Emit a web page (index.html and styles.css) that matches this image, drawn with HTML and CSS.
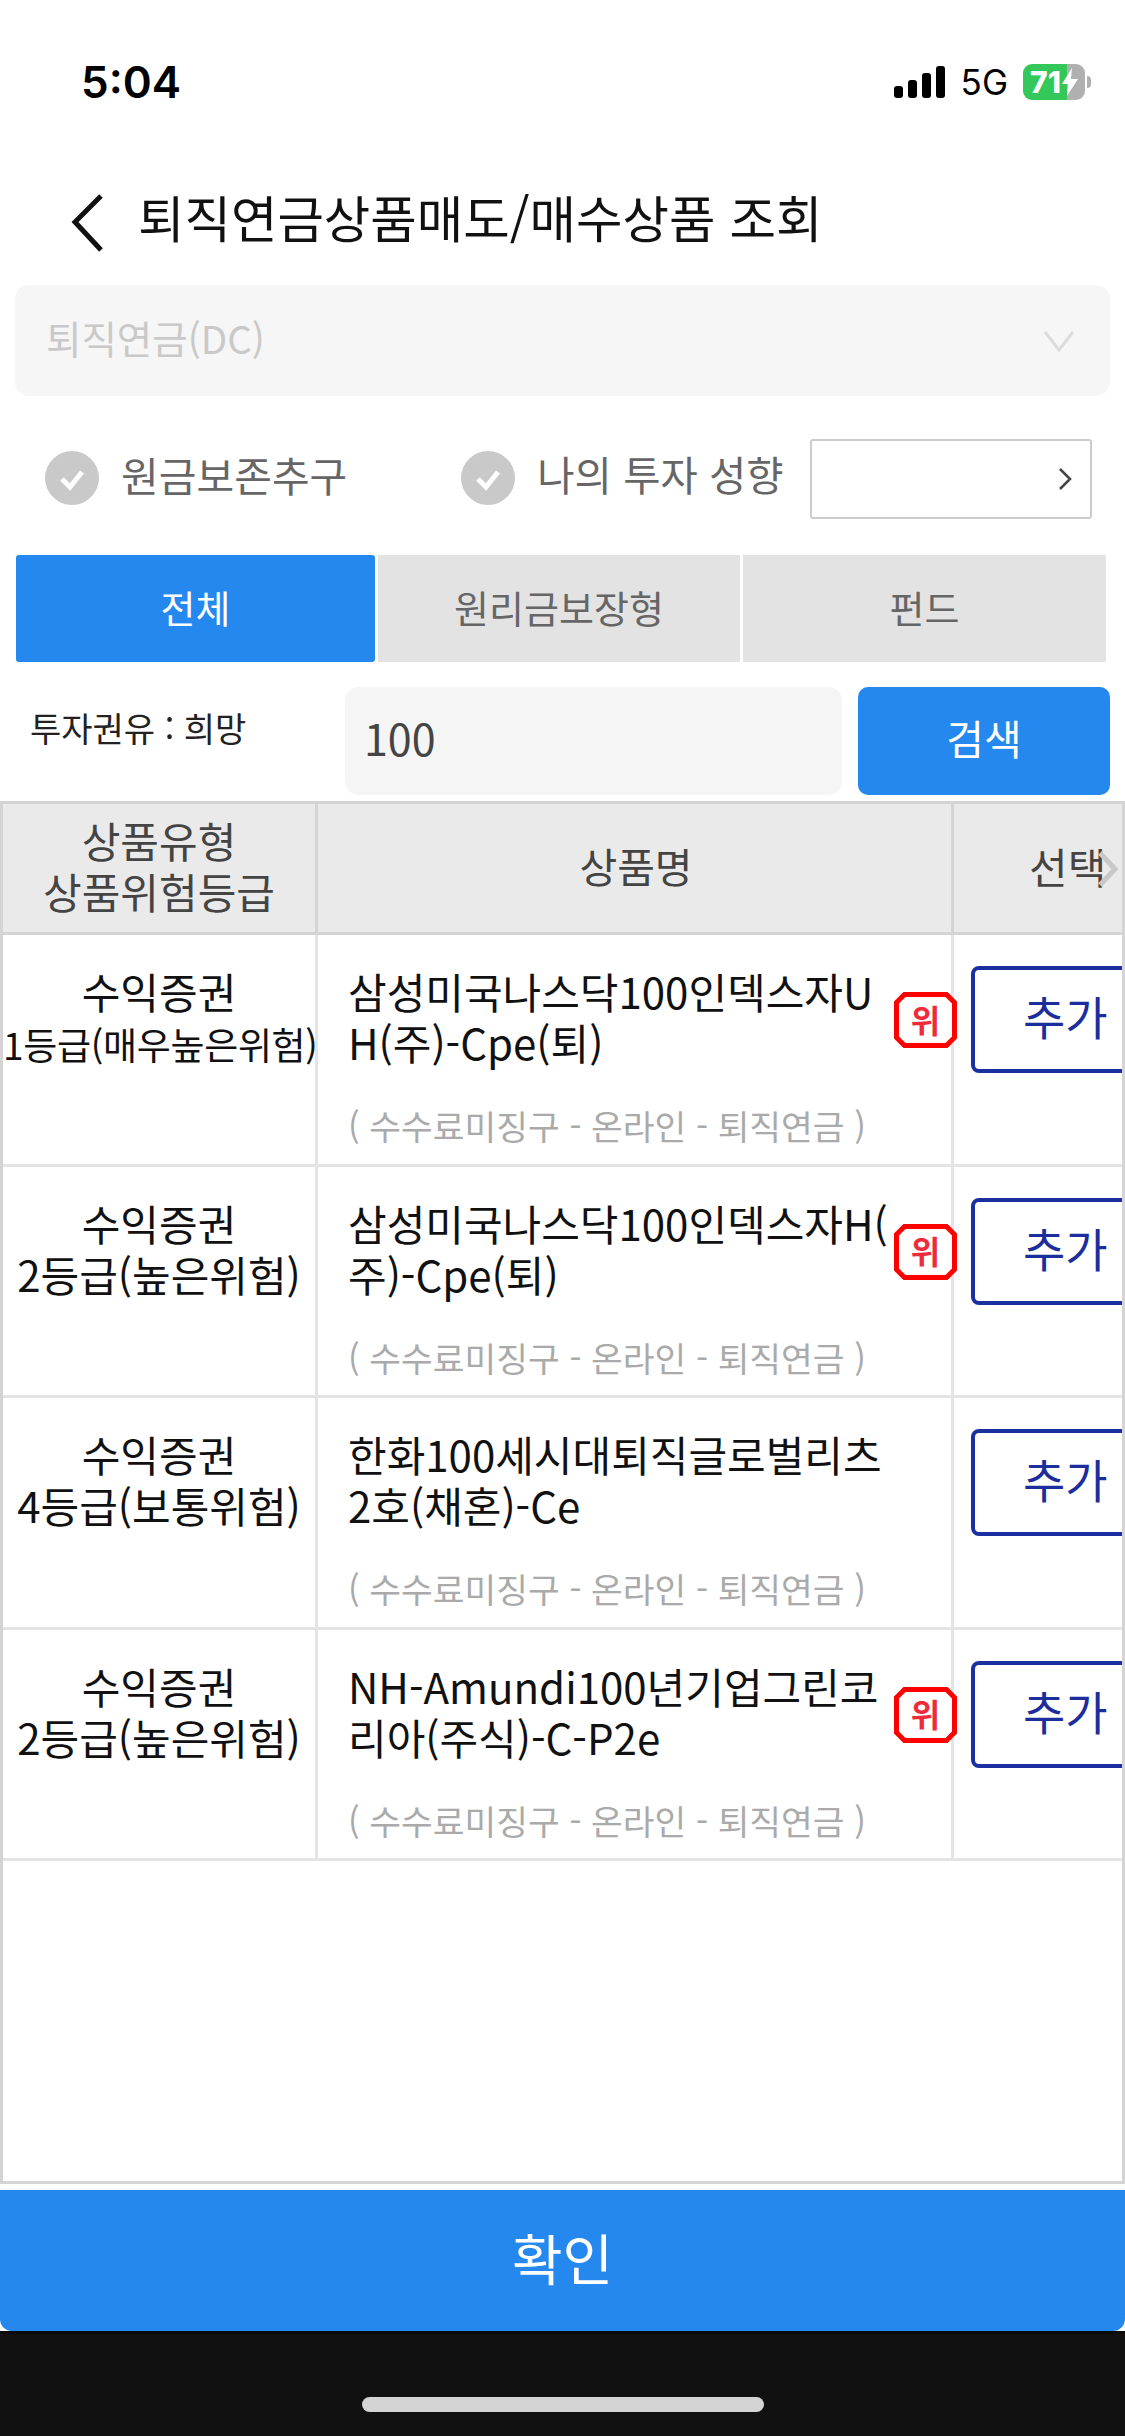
FILE: index.html
```html
<!DOCTYPE html>
<html lang="ko">
	<head>
		<meta charset="UTF-8">
		<meta name="viewport" content="width=device-width, initial-scale=1.0">
		<title>퇴직연금상품매도/매수상품 조회</title>
		<link rel="stylesheet" href="styles.css">
	</head>
	<body>
		<div class="page">
			<div class="statusbar">
				<span class="time">5:04</span>
				<div class="status-right">
					<div class="signal"><i class="b1"></i><i class="b2"></i><i class="b3"></i><i class="b4"></i></div>
					<span class="net">5G</span>
					<div class="battery">
						<span class="batt-num">71</span>
						<svg class="bolt" width="16" height="28" viewBox="0 0 16 28"><path d="M10 0 L0 16 H6 L5 28 L16 11 H9 Z" fill="#fff"/></svg>
					</div>
					<div class="batt-nub"></div>
				</div>
			</div>

			<div class="header">
				<svg class="back" width="34" height="58" viewBox="0 0 34 58"><polyline points="31,2 5,28 31,56" fill="none" stroke="#111" stroke-width="5"/></svg>
				<span class="title">퇴직연금상품매도/매수상품 조회</span>
			</div>

			<div class="select">
				<span>퇴직연금(DC)</span>
				<svg width="32" height="24" viewBox="0 0 32 24"><polyline points="2,3 16,21 30,3" fill="none" stroke="#dcdcdc" stroke-width="3"/></svg>
			</div>

			<div class="checks">
				<div class="check">
					<svg width="54" height="54" viewBox="0 0 54 54"><circle cx="27" cy="27" r="27" fill="#c9c9c9"/><polyline points="17,28 25,36 37,21" fill="none" stroke="#fff" stroke-width="5"/></svg>
					<span>원금보존추구</span>
				</div>
				<div class="check check-second">
					<svg width="54" height="54" viewBox="0 0 54 54"><circle cx="27" cy="27" r="27" fill="#c9c9c9"/><polyline points="17,28 25,36 37,21" fill="none" stroke="#fff" stroke-width="5"/></svg>
					<span>나의 투자 성향</span>
				</div>
				<div class="tendency">
					<svg width="14" height="24" viewBox="0 0 14 24"><polyline points="2,2 12,12 2,22" fill="none" stroke="#444" stroke-width="2.5"/></svg>
				</div>
			</div>

			<div class="tabs">
				<div class="tab active">전체</div>
				<div class="tab">원리금보장형</div>
				<div class="tab">펀드</div>
			</div>

			<div class="searchrow">
				<div class="invest">투자권유 : 희망</div>
				<div class="searchbox">100</div>
				<div class="searchbtn">검색</div>
			</div>

			<div class="table">
				<div class="row row-head">
					<div class="cell c1">상품유형<br>상품위험등급</div>
					<div class="cell c2 head-name">상품명</div>
					<div class="cell c3 head-select">
						<span>선택</span>
						<svg class="more" width="20" height="38" viewBox="0 0 20 38"><polyline points="2,3 17,19 2,35" fill="none" stroke="#c8c8c8" stroke-width="5"/></svg>
					</div>
				</div>

				<div class="row">
					<div class="cell c1"><div class="kind">수익증권<br><span class="tight">1등급(매우높은위험)</span></div></div>
					<div class="cell c2 name">
						<div class="name-text">삼성미국나스닥100인덱스자U<br>H(주)-Cpe(퇴)</div>
						<div class="sub">( 수수료미징구 - 온라인 - 퇴직연금 )</div>
						<span class="risk"><svg width="63" height="56" viewBox="0 0 63 56"><polygon points="10.5,2.5 52.5,2.5 60.5,10.5 60.5,45.5 52.5,53.5 10.5,53.5 2.5,45.5 2.5,10.5" fill="#fff" stroke="#f00" stroke-width="5"/></svg><b>위</b></span>
					</div>
					<div class="cell c3"><div class="add">추가</div></div>
				</div>

				<div class="row">
					<div class="cell c1"><div class="kind">수익증권<br>2등급(높은위험)</div></div>
					<div class="cell c2 name">
						<div class="name-text">삼성미국나스닥100인덱스자H(<br>주)-Cpe(퇴)</div>
						<div class="sub">( 수수료미징구 - 온라인 - 퇴직연금 )</div>
						<span class="risk"><svg width="63" height="56" viewBox="0 0 63 56"><polygon points="10.5,2.5 52.5,2.5 60.5,10.5 60.5,45.5 52.5,53.5 10.5,53.5 2.5,45.5 2.5,10.5" fill="#fff" stroke="#f00" stroke-width="5"/></svg><b>위</b></span>
					</div>
					<div class="cell c3"><div class="add">추가</div></div>
				</div>

				<div class="row">
					<div class="cell c1"><div class="kind">수익증권<br>4등급(보통위험)</div></div>
					<div class="cell c2 name">
						<div class="name-text">한화100세시대퇴직글로벌리츠<br>2호(채혼)-Ce</div>
						<div class="sub">( 수수료미징구 - 온라인 - 퇴직연금 )</div>
					</div>
					<div class="cell c3"><div class="add">추가</div></div>
				</div>

				<div class="row">
					<div class="cell c1"><div class="kind">수익증권<br>2등급(높은위험)</div></div>
					<div class="cell c2 name">
						<div class="name-text">NH-Amundi100년기업그린코<br>리아(주식)-C-P2e</div>
						<div class="sub">( 수수료미징구 - 온라인 - 퇴직연금 )</div>
						<span class="risk"><svg width="63" height="56" viewBox="0 0 63 56"><polygon points="10.5,2.5 52.5,2.5 60.5,10.5 60.5,45.5 52.5,53.5 10.5,53.5 2.5,45.5 2.5,10.5" fill="#fff" stroke="#f00" stroke-width="5"/></svg><b>위</b></span>
					</div>
					<div class="cell c3"><div class="add">추가</div></div>
				</div>
			</div>

			<div class="confirm">확인</div>

			<div class="homebar"><div class="indicator"></div></div>
		</div>
	</body>
</html>
```

FILE: styles.css
```css
* {
	box-sizing: border-box;
}

body {
	margin: 0;
	padding: 0;
	font-family: "Noto Sans CJK KR", "Noto Sans", sans-serif;
	background-color: #ffffff;
}

.page {
	width: 1125px;
	height: 2436px;
	display: flex;
	flex-direction: column;
	overflow: hidden;
}

/* status bar */
.statusbar {
	height: 150px;
	flex: none;
	display: flex;
	justify-content: space-between;
	padding: 57px 34px 0 81px;
}

.time {
	font-family: Inter, sans-serif;
	font-size: 44px;
	font-weight: 600;
	line-height: 50px;
	color: #000000;
}

.status-right {
	display: flex;
	align-items: center;
	height: 50px;
}

.signal {
	display: flex;
	align-items: flex-end;
	gap: 5px;
	height: 32px;
}

.signal i {
	display: block;
	width: 9px;
	border-radius: 3px;
	background-color: #000000;
}

.b1 { height: 12px; }
.b2 { height: 18px; }
.b3 { height: 25px; }
.b4 { height: 32px; }

.net {
	font-family: Inter, sans-serif;
	font-size: 35px;
	line-height: 36px;
	margin-left: 16px;
	color: #000000;
}

.battery {
	width: 62px;
	height: 36px;
	margin-left: 15px;
	border-radius: 9px;
	display: flex;
	align-items: center;
	padding-left: 7px;
	background: linear-gradient(to right, #34c759 44px, #b0b0b0 44px);
}

.batt-num {
	font-family: Inter, sans-serif;
	font-size: 30px;
	font-weight: 800;
	line-height: 36px;
	color: #ffffff;
}

.bolt {
	margin-left: 1px;
}

.batt-nub {
	width: 4px;
	height: 12px;
	margin-left: 2px;
	border-radius: 0 4px 4px 0;
	background-color: #b0b0b0;
}

/* header */
.header {
	height: 135px;
	flex: none;
	display: flex;
	align-items: flex-start;
	padding: 44px 0 0 70px;
}

.back {
	flex: none;
}

.title {
	font-size: 50.5px;
	line-height: 52px;
	margin-top: -4px;
	margin-left: 34px;
	color: #111111;
}

.select {
	height: 111px;
	flex: none;
	margin: 0 15px;
	padding: 0 35px 8px 31px;
	display: flex;
	align-items: center;
	justify-content: space-between;
	font-size: 38.5px;
	color: #c9c9c9;
	background-color: #f6f6f6;
	border-radius: 14px;
}

.select svg {
	margin-top: 8px;
}

/* checks */
.checks {
	height: 159px;
	flex: none;
	display: flex;
	align-items: flex-start;
	padding: 43px 33px 0 45px;
}

.check {
	display: flex;
	align-items: center;
	height: 78px;
	font-size: 41px;
	color: #666666;
}

.check span {
	margin-left: 22px;
	padding-bottom: 9px;
}

.check-second {
	margin-left: 114px;
	font-size: 40.5px;
}

.tendency {
	width: 282px;
	height: 80px;
	margin-left: auto;
	display: flex;
	align-items: center;
	justify-content: flex-end;
	padding-right: 18px;
	background-color: #ffffff;
	border: 2px solid #cccccc;
	border-radius: 3px;
}

/* tabs */
.tabs {
	height: 107px;
	flex: none;
	margin: 0 19px 0 16px;
	display: grid;
	grid-template-columns: 359px 362px 363px;
	gap: 3px;
}

.tab {
	display: flex;
	align-items: center;
	justify-content: center;
	padding-bottom: 5px;
	font-size: 38px;
	color: #666666;
	background-color: #e3e3e3;
}

.tab.active {
	color: #ffffff;
	background-color: #2488ee;
	border-radius: 3px;
}

/* search */
.searchrow {
	height: 108px;
	flex: none;
	margin: 25px 15px 0 0;
	display: flex;
}

.invest {
	width: 345px;
	padding: 19px 0 0 30px;
	font-size: 34px;
	line-height: 44px;
	color: #222222;
}

.searchbox {
	width: 497px;
	padding: 0 0 9px 19px;
	display: flex;
	align-items: center;
	font-size: 43px;
	color: #444444;
	background-color: #f5f5f5;
	border-radius: 14px;
}

.searchbtn {
	width: 252px;
	margin-left: 16px;
	padding-bottom: 9px;
	display: flex;
	align-items: center;
	justify-content: center;
	font-size: 41px;
	color: #ffffff;
	background-color: #2488ee;
	border-radius: 10px;
}

/* table */
.table {
	height: 1383px;
	flex: none;
	margin-top: 6px;
	border: 3px solid #d4d4d4;
	overflow: hidden;
	background-color: #ffffff;
}

.row {
	height: 231.5px;
	display: grid;
	grid-template-columns: 315px 636px 1fr;
	border-bottom: 3px solid #e4e4e4;
}

.row-head {
	height: 131px;
	color: #444444;
	background-color: #eaeaea;
	border-bottom: 3px solid #d4d4d4;
}

.cell {
	position: relative;
	font-size: 42px;
	line-height: 51px;
	color: #111111;
}

.row-head .cell {
	display: flex;
	align-items: center;
	justify-content: center;
	padding-bottom: 6px;
	text-align: center;
	color: #444444;
}

.c1, .c2 {
	border-right: 3px solid #e4e4e4;
}

.row-head .c1, .row-head .c2 {
	border-right-color: #d4d4d4;
}

.kind {
	padding-top: 30px;
	text-align: center;
}

.tight {
	font-size: 37px;
	letter-spacing: -0.3px;
	white-space: nowrap;
}

.row-head .head-name {
	padding-left: 3px;
	font-size: 41px;
}

.row-head .head-select {
	justify-content: flex-start;
	padding-left: 75px;
}

.head-select span {
	white-space: nowrap;
}

.more {
	position: absolute;
	top: 46px;
	right: 4px;
}

.name {
	padding: 30px 0 0 30px;
}

.name-text {
	font-size: 42px;
	line-height: 51px;
	white-space: nowrap;
}

.sub {
	margin-top: 36px;
	font-size: 34.5px;
	line-height: 44px;
	white-space: nowrap;
	color: #aaaaaa;
}

.risk {
	position: absolute;
	top: 57px;
	right: -6px;
	width: 63px;
	height: 56px;
	display: flex;
	align-items: center;
	justify-content: center;
}

.risk svg {
	position: absolute;
	top: 0;
	left: 0;
}

.risk b {
	position: relative;
	font-size: 32px;
	line-height: 56px;
	padding-bottom: 3px;
	color: #ee2b3a;
}

.add {
	width: 180px;
	height: 107px;
	margin: 31px 0 0 17px;
	padding-left: 48px;
	font-size: 46px;
	line-height: 91px;
	white-space: nowrap;
	color: #1c2d9c;
	background-color: #ffffff;
	border: 4px solid #1a2fa0;
	border-radius: 8px;
}

/* bottom */
.confirm {
	height: 141px;
	flex: none;
	margin-top: 6px;
	padding-bottom: 9px;
	display: flex;
	align-items: center;
	justify-content: center;
	font-size: 55px;
	color: #ffffff;
	background-color: #2488ee;
	border-radius: 0 0 12px 12px;
}

.homebar {
	flex: 1;
	display: flex;
	justify-content: center;
	padding-top: 63px;
	background-color: #111111;
	border-top: 3px solid #0a0a0a;
}

.indicator {
	width: 402px;
	height: 15px;
	border-radius: 8px;
	background-color: #d4d4d4;
}
```
